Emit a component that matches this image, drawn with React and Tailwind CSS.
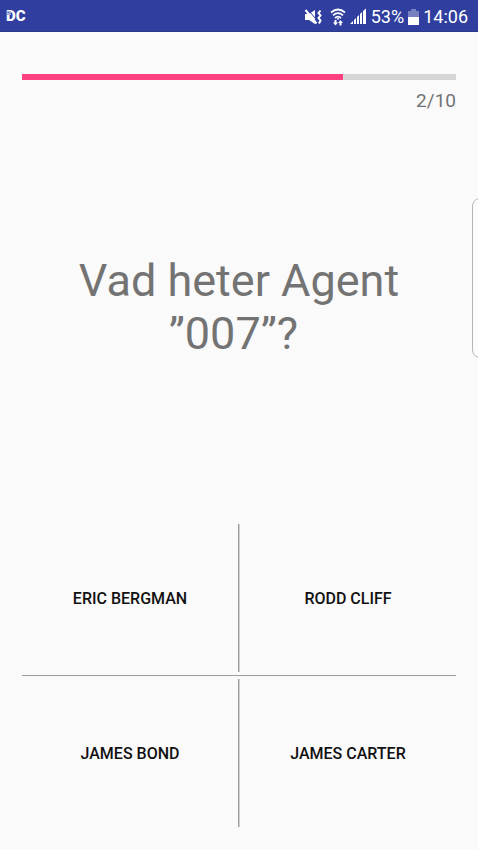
const QUESTION = {
  text: 'Vad heter Agent ”007”?\u00a0',
  number: 2,
  total: 10,
  answers: [
    ['ERIC BERGMAN', 'RODD CLIFF'],
    ['JAMES BOND', 'JAMES CARTER'],
  ],
};

function Logo() {
  return (
    <div className="relative text-[15px] leading-none font-black text-white">
      DC
      <svg className="absolute top-0.5 left-px" width="4" height="4" viewBox="0 0 4 4" aria-hidden="true">
        <rect width="4" height="4" fill="#a9b0dc" />
        <rect x="1" y="1" width="1" height="1" fill="#5966b8" />
        <rect x="3" y="2" width="1" height="1" fill="#5966b8" />
      </svg>
    </div>
  );
}

function MuteVibrateIcon() {
  return (
    <svg width="18" height="16" viewBox="0 0 18 16" aria-hidden="true">
      <path d="M1 5H5L11 1V15L5 11H1Z" fill="#fff" />
      <path d="M3.500 0L13.500 12" stroke="#303f9f" strokeWidth="1" />
      <path d="M1.500 1L12.500 14.500" stroke="#fff" strokeWidth="2" />
      <path d="M16.500 1.500L14.500 4L16.500 6.500L14.500 9L16.500 11.500L15 14.500" fill="none" stroke="#fff" strokeWidth="2" />
    </svg>
  );
}

function WifiIcon() {
  return (
    <svg width="16" height="18" viewBox="0 0 16 18" aria-hidden="true">
      <g fill="none" stroke="#fff" strokeWidth="1.700">
        <path d="M1 4.500Q8 -1.500 15 4.500" />
        <path d="M3 7.300Q8 3 13 7.300" />
        <path d="M5 10Q8 7.300 11 10" />
      </g>
      <path d="M6.500 10.500Q8 9.500 9.500 10.500L8 12Z" fill="#fff" />
      <path d="M4.500 12H6.500V14.500H8L5.500 17.500L3 14.500H4.500ZM9.500 17.500V15H8L10.500 12L13 15H11.500V17.500Z" fill="#fff" />
    </svg>
  );
}

function SignalIcon() {
  return (
    <svg width="17" height="17" viewBox="0 0 17 17" fill="#fff" aria-hidden="true">
      <path d="M0 16L3 13V16ZM4 12L6 10V16H4ZM7 9L9 7V16H7ZM10 6L12 4V16H10ZM13 3L16 0.500V16H13Z" />
    </svg>
  );
}

function BatteryIcon() {
  return (
    <svg width="11" height="16" viewBox="0 0 11 16" aria-hidden="true">
      <path d="M3 0H8V2H11V8H0V2H3Z" fill="#7781c0" />
      <rect y="8" width="11" height="8" fill="#fff" />
    </svg>
  );
}

function StatusBar() {
  return (
    <header className="flex h-8 items-center border-b border-[#2a3889] bg-[#303f9f] pt-0.5 pr-2.5 pl-1.5 text-lg text-white">
      <Logo />
      <div className="ml-auto flex items-center">
        <MuteVibrateIcon />
        <span className="ml-2"><WifiIcon /></span>
        <span className="ml-1"><SignalIcon /></span>
        <span className="ml-1">53%</span>
        <span className="ml-1"><BatteryIcon /></span>
        <time className="ml-1">14:06</time>
      </div>
    </header>
  );
}

function AnswerRow({ answers }) {
  return (
    <div className="grid h-[148px] grid-cols-[1fr_2px_1fr]">
      <button type="button" className="pt-0.5 font-medium text-[#111111]">{answers[0]}</button>
      <div className="border-r border-l border-r-[#cfcfcf] border-l-[#9c9c9c]" />
      <button type="button" className="pt-0.5 font-medium text-[#111111]">{answers[1]}</button>
    </div>
  );
}

export default function App() {
  return (
    <div className="relative flex min-h-screen flex-col overflow-hidden bg-[#fafafa] font-['Roboto',sans-serif]">
      <StatusBar />
      <main className="flex flex-1 flex-col px-[22px] pt-[42px] pb-[22px]">
        <div role="progressbar" aria-label="Tid" aria-valuenow={74} aria-valuemin={0} aria-valuemax={100} className="h-1.5 bg-[#d6d6d6]">
          <div className="h-full w-[74%] bg-[#ff4081]" />
        </div>
        <p className="mt-2 text-right text-[19px] leading-[26px] text-[#737373]">
          {QUESTION.number}/{QUESTION.total}
        </p>
        <div className="flex flex-1 items-center justify-center px-8 pb-6">
          <h1 className="text-center text-[45px] leading-[53px] text-[#737373]">{QUESTION.text}</h1>
        </div>
        <div className="flex flex-col gap-[3px]">
          <AnswerRow answers={QUESTION.answers[0]} />
          <hr className="border-[#9c9c9c]" />
          <AnswerRow answers={QUESTION.answers[1]} />
        </div>
      </main>
      <div className="absolute top-[198px] -right-2 h-[160px] w-[14px] rounded-l-lg border border-[#b5b5b5] bg-[#fcfcfc]" />
    </div>
  );
}
